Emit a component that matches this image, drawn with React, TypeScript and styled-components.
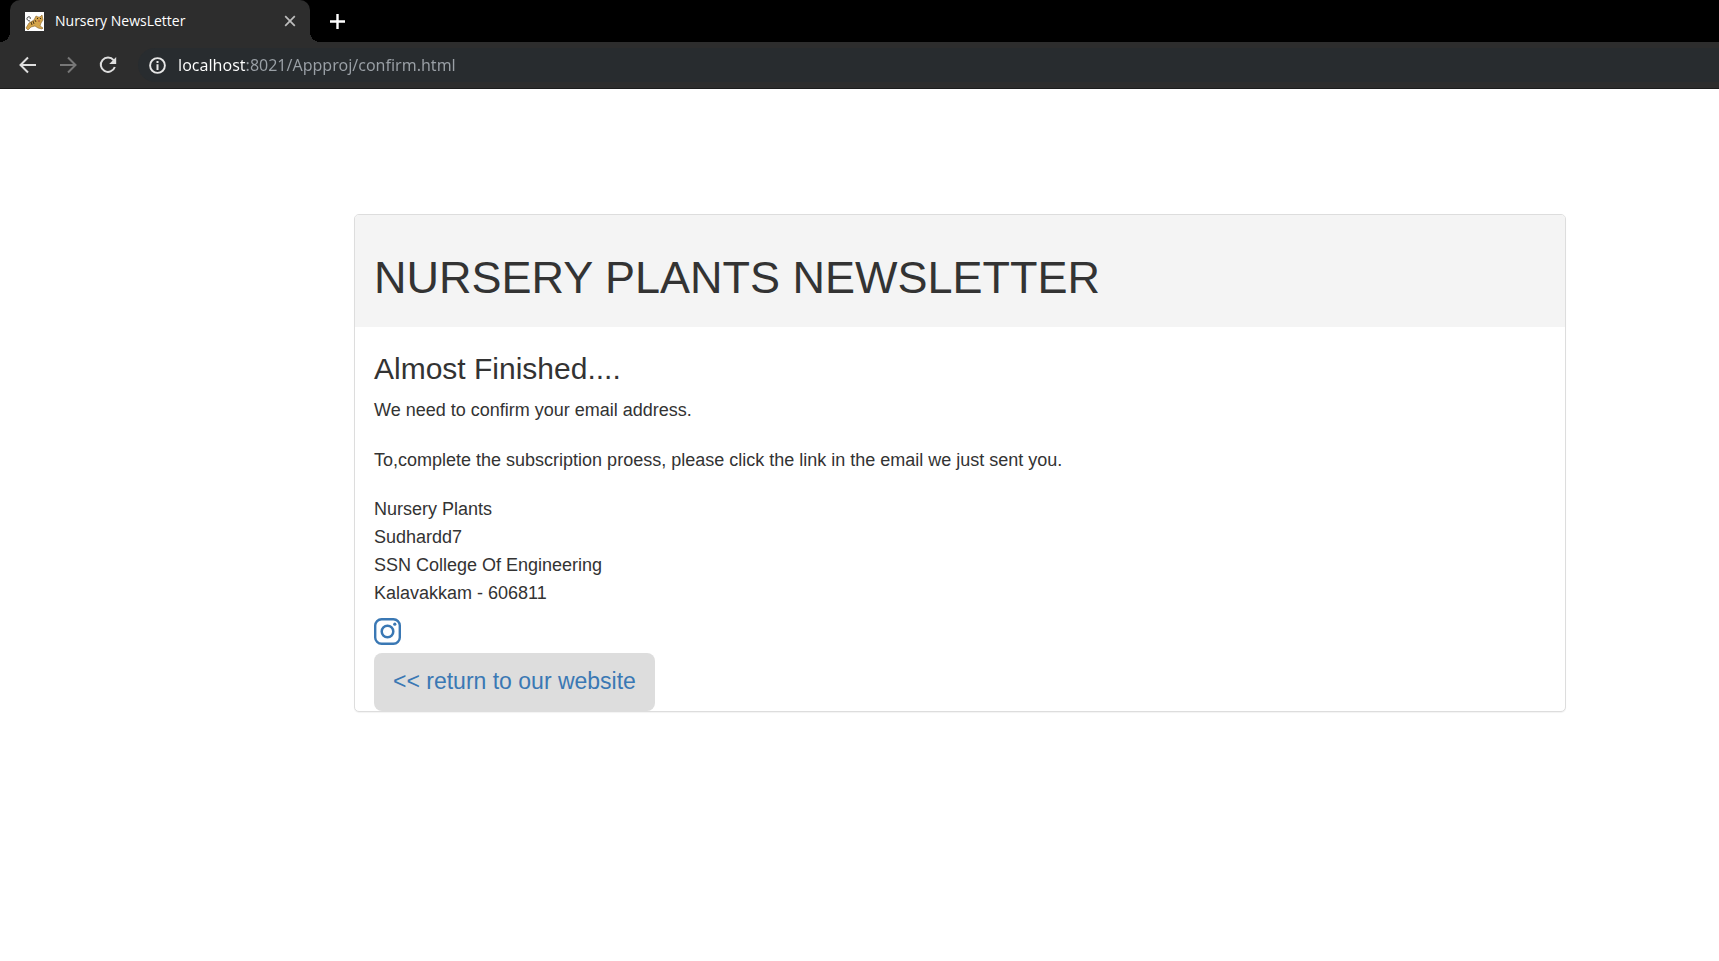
import React from "react";
import styled, { createGlobalStyle } from "styled-components";

const GlobalStyle = createGlobalStyle`
  *, *::before, *::after { box-sizing: border-box; }
  body {
    margin: 0;
    background: #fff;
    color: #333;
    font-family: "Liberation Sans", Arial, sans-serif;
    font-size: 18px;
    line-height: 25px;
  }
`;

const Browser = styled.header`
  font-family: "Open Sans", "Noto Sans", sans-serif;
  background: #000;
`;

const TabStrip = styled.div`
  display: flex;
  align-items: stretch;
  height: 42px;
  padding-left: 10px;
`;

const Tab = styled.div`
  position: relative;
  display: flex;
  align-items: center;
  width: 300px;
  padding: 0 10px 0 15px;
  background: #2d2d2d;
  border-radius: 10px 10px 0 0;

  &::before,
  &::after {
    content: "";
    position: absolute;
    bottom: 0;
    width: 10px;
    height: 10px;
  }
  &::before {
    right: 100%;
    background: radial-gradient(circle at 0 0, transparent 10px, #2d2d2d 10px);
  }
  &::after {
    left: 100%;
    background: radial-gradient(circle at 100% 0, transparent 10px, #2d2d2d 10px);
  }
`;

const TabTitle = styled.span`
  flex: 1;
  margin-left: 11px;
  color: #fff;
  font-size: 14px;
  line-height: 20px;
  white-space: nowrap;
`;

const IconButton = styled.button<{ $size: number }>`
  display: flex;
  align-items: center;
  justify-content: center;
  width: ${(p) => p.$size}px;
  height: ${(p) => p.$size}px;
  padding: 0;
  border: 0;
  border-radius: 50%;
  background: none;
  color: #dedede;

  &:disabled { color: #777; }
`;

const CloseTab = styled(IconButton)`
  color: #bdbdbd;
`;

const NewTab = styled(IconButton)`
  align-self: center;
  margin-left: 12px;
  color: #fff;
`;

const Toolbar = styled.div`
  display: flex;
  align-items: center;
  gap: 4px;
  height: 47px;
  padding-left: 10px;
  background: #2d2d2d;
  border-bottom: 1px solid #1c1c1c;
`;

const AddressBar = styled.form`
  display: flex;
  flex: 1;
  align-items: center;
  gap: 12px;
  height: 34px;
  margin-left: 8px;
  padding-left: 11px;
  border-radius: 17px 0 0 17px;
  background: #282c2f;
  color: #e6e6e6;
`;

const Address = styled.input`
  flex: 1;
  min-width: 0;
  height: 24px;
  padding: 0;
  border: 0;
  outline: 0;
  background: linear-gradient(to right, #fff 68px, #9aa0a6 68px);
  -webkit-background-clip: text;
  background-clip: text;
  color: #9aa0a6;
  -webkit-text-fill-color: transparent;
  font-family: "Noto Sans", "Open Sans", sans-serif;
  font-size: 16px;
  line-height: 24px;
`;

const Page = styled.main`
  padding: 125px 153px 50px 354px;
`;

const Card = styled.section`
  border: 1px solid #ddd;
  border-radius: 5px;
  background: #fff;
  box-shadow: 0 1px 1px rgba(0, 0, 0, 0.05);
`;

const CardHeader = styled.div`
  padding: 38px 19px 24px;
  border-radius: 4px 4px 0 0;
  background: #f4f4f4;
`;

const Title = styled.h1`
  margin: 0;
  font-size: 45px;
  font-weight: 400;
  line-height: 50px;
`;

const CardBody = styled.div`
  padding: 25px 19px 0;
`;

const Subtitle = styled.h3`
  margin: 0 0 13px;
  font-size: 30px;
  font-weight: 400;
  line-height: 33px;
`;

const Paragraph = styled.p`
  margin: 0 0 25px;
`;

const PostalAddress = styled.address`
  margin-top: -3px;
  font-style: normal;
  line-height: 28px;
`;

const SocialLink = styled.a`
  display: block;
  width: 27px;
  height: 27px;
  margin: 11px 0 8px;
  color: #3a78b4;
`;

const ReturnLink = styled.a`
  display: inline-flex;
  align-items: center;
  height: 58px;
  padding: 0 19px 2px;
  border-radius: 8px;
  background: #ddd;
  color: #3a78b4;
  font-size: 23px;
  line-height: 30px;
  text-decoration: none;
  vertical-align: top;
`;

const Favicon = () => (
  <svg width="19" height="19" viewBox="0 0 19 19" aria-hidden="true">
    <path fill="#fff" d="M0 0h19v19H0z" />
    <path fill="none" stroke="#444" d="M5 9C2 9 1 6 3 5c2-1 3 1 2 2" />
    <path fill="#d5a54b" stroke="#8a672b" strokeWidth=".6" d="M1 16l3-5 5-3 2-4 2 1h2l2-2 1 5-2 3-1 3 3 2-1 1-4-1-3-2-4 1-3 3z" />
    <path fill="none" stroke="#554021" d="M6 10l1 3M8 9l1 3M10 8l1 2" />
    <path fill="#332a1c" d="M12 6h1v1h-1zM15 6h1v1h-1z" />
    <path stroke="#b5533f" d="M13 9h2" />
  </svg>
);

const CloseIcon = () => (
  <svg width="12" height="12" viewBox="0 0 12 12" stroke="currentColor" strokeWidth="1.7">
    <path d="M1.2 1.2l9.6 9.6M10.8 1.2l-9.6 9.6" />
  </svg>
);

const PlusIcon = () => (
  <svg width="16" height="16" viewBox="0 0 16 16" stroke="currentColor" strokeWidth="2.4">
    <path d="M8.5 1v15M1 8.5h15" />
  </svg>
);

const ArrowIcon = ({ forward = false }: { forward?: boolean }) => (
  <svg width="18" height="18" viewBox="0 0 18 18" fill="none" stroke="currentColor" strokeWidth="2">
    <path d={forward ? "M1 9h15M9 1.5L16.5 9 9 16.5" : "M17 9H2M9 1.5L1.5 9 9 16.5"} />
  </svg>
);

const ReloadIcon = () => (
  <svg width="18" height="18" viewBox="0 0 18 18">
    <path fill="none" stroke="currentColor" strokeWidth="2" d="M14.6 4.2A7.2 7.2 0 1 0 15.8 11" />
    <path fill="currentColor" d="M17.2 1v7h-7z" />
  </svg>
);

const InfoIcon = () => (
  <svg width="17" height="17" viewBox="0 0 17 17" aria-hidden="true">
    <circle cx="8.5" cy="8.5" r="7.4" fill="none" stroke="currentColor" strokeWidth="1.9" />
    <path fill="currentColor" d="M7.5 4h2v2h-2zM7.5 7.3h2V13h-2z" />
  </svg>
);

const InstagramIcon = () => (
  <svg width="27" height="27" viewBox="0 0 27 27" fill="none" stroke="currentColor" display="block">
    <rect x="1.2" y="1.2" width="24.6" height="24.6" rx="6.4" strokeWidth="2.4" />
    <circle cx="13.5" cy="13.5" r="5.8" strokeWidth="2.5" />
    <circle cx="20.8" cy="6.2" r="1.6" fill="currentColor" stroke="none" />
  </svg>
);

export default function App() {
  return (
    <>
      <GlobalStyle />
      <Browser>
        <TabStrip>
          <Tab>
            <Favicon />
            <TabTitle>Nursery NewsLetter</TabTitle>
            <CloseTab type="button" $size={20} aria-label="Close tab">
              <CloseIcon />
            </CloseTab>
          </Tab>
          <NewTab type="button" $size={30} aria-label="New tab">
            <PlusIcon />
          </NewTab>
        </TabStrip>
        <Toolbar>
          <IconButton type="button" $size={36} aria-label="Back">
            <ArrowIcon />
          </IconButton>
          <IconButton type="button" $size={36} aria-label="Forward" disabled>
            <ArrowIcon forward />
          </IconButton>
          <IconButton type="button" $size={36} aria-label="Reload">
            <ReloadIcon />
          </IconButton>
          <AddressBar onSubmit={(e) => e.preventDefault()}>
            <InfoIcon />
            <Address
              type="text"
              aria-label="Address"
              spellCheck={false}
              defaultValue="localhost:8021/Appproj/confirm.html"
            />
          </AddressBar>
        </Toolbar>
      </Browser>
      <Page>
        <Card>
          <CardHeader>
            <Title>NURSERY PLANTS NEWSLETTER</Title>
          </CardHeader>
          <CardBody>
            <Subtitle>Almost Finished....</Subtitle>
            <Paragraph>We need to confirm your email address.</Paragraph>
            <Paragraph>
              To,complete the subscription proess, please click the link in the email we just sent you.
            </Paragraph>
            <PostalAddress>
              Nursery Plants
              <br />
              Sudhardd7
              <br />
              SSN College Of Engineering
              <br />
              Kalavakkam - 606811
            </PostalAddress>
            <SocialLink href="#instagram" aria-label="Instagram">
              <InstagramIcon />
            </SocialLink>
            <ReturnLink href="#home">&lt;&lt; return to our website</ReturnLink>
          </CardBody>
        </Card>
      </Page>
    </>
  );
}
